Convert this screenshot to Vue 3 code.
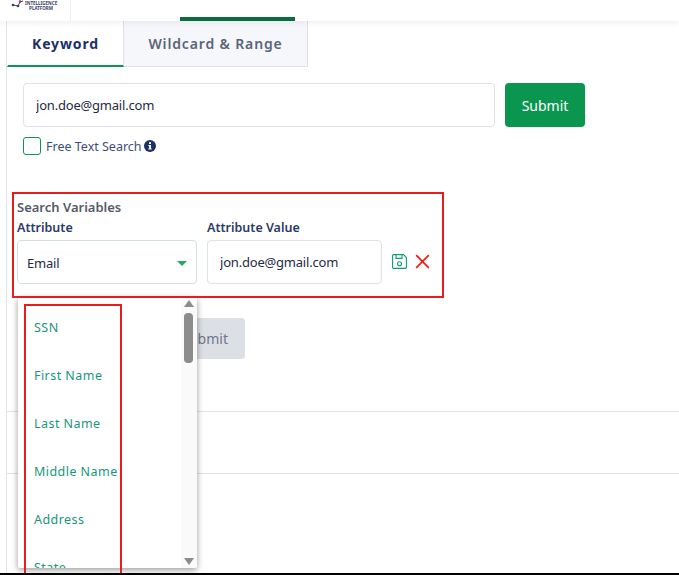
<script setup>
const options = ['SSN', 'First Name', 'Last Name', 'Middle Name', 'Address', 'State']
</script>

<template>
  <div class="page">
    <header class="top-bar">
      <div class="logo">
        <svg class="logo-mark" width="13" height="8" viewBox="0 0 13 8">
          <path d="M2 5 L7 6 L9 2 L12 1" fill="none" stroke="#3b3f6b" stroke-width="1" />
          <circle cx="2" cy="5" r="1.3" fill="#3b3f6b" />
          <circle cx="7" cy="6" r="1.3" fill="#3b3f6b" />
          <circle cx="9" cy="1.5" r="1.2" fill="#b0315a" />
        </svg>
        <div class="logo-text">
          <span>INTELLIGENCE</span>
          <span>PLATFORM</span>
        </div>
      </div>
      <div class="top-tab"></div>
    </header>

    <main class="content">
      <nav class="tabs">
        <button class="tab is-active">Keyword</button>
        <button class="tab">Wildcard &amp; Range</button>
      </nav>

      <div class="search-row">
        <input class="field search-input" value="jon.doe@gmail.com" />
        <button class="submit">Submit</button>
      </div>

      <label class="free-text">
        <span class="checkbox"></span>
        <span>Free Text Search</span>
        <svg class="info" width="12" height="12" viewBox="0 0 12 12">
          <circle cx="6" cy="6" r="6" fill="#1c2f66" />
          <rect x="5" y="2.2" width="2" height="1.8" fill="#fff" />
          <path d="M4.3 5h2.7v3.6h.8v1H4.3v-1h.8V6h-.8z" fill="#fff" />
        </svg>
      </label>

      <section class="variables">
        <h3 class="variables-title">Search Variables</h3>
        <div class="variables-row">
          <div class="col">
            <label class="col-label">Attribute</label>
            <div class="field select">
              <span>Email</span>
              <span class="caret"></span>
            </div>
          </div>
          <div class="col">
            <label class="col-label">Attribute Value</label>
            <input class="field value-input" value="jon.doe@gmail.com" />
          </div>
          <div class="actions">
            <svg width="15" height="15" viewBox="0 0 15 15" fill="none" stroke="#0f9d6b" stroke-width="1.1">
              <path d="M1.5.6h10l2.9 2.9v9.7a1.2 1.2 0 0 1-1.2 1.2H1.8a1.2 1.2 0 0 1-1.2-1.2V1.5A1 1 0 0 1 1.5.6z" />
              <path d="M4 .6v3.8h6V.6" />
              <circle cx="7.5" cy="9.8" r="2" />
            </svg>
            <svg width="15" height="15" viewBox="0 0 15 15" fill="none" stroke="#e8201c" stroke-width="1.7">
              <path d="M1.2 1.2l12.6 12.6M13.8 1.2L1.2 13.8" />
            </svg>
          </div>
        </div>
      </section>

      <div class="submit-row">
        <button class="submit-disabled">Submit</button>
      </div>
      <hr class="rule first" />
      <hr class="rule second" />

      <div class="dropdown">
        <ul class="options">
          <li v-for="opt in options" :key="opt">{{ opt }}</li>
        </ul>
        <div class="scrollbar">
          <span class="arrow up"></span>
          <span class="thumb"></span>
          <span class="arrow down"></span>
        </div>
      </div>
    </main>

    <div class="mark mark-variables"></div>
    <div class="mark mark-options"></div>
  </div>
</template>

<style>
html, body {
  margin: 0;
  background: #fff;
  overflow: hidden;
}
</style>

<style scoped>
.page {
  position: relative;
  width: 679px;
  height: 575px;
  box-sizing: border-box;
  border-bottom: 2px solid #000;
  overflow: hidden;
  font-family: "Noto Sans", "Open Sans", sans-serif;
  color: #1c2f66;
  background: #fff;
}

.top-bar {
  position: relative;
  z-index: 2;
  display: flex;
  height: 21px;
  background: #fff;
  box-shadow: 0 2px 6px rgba(30, 30, 60, 0.07);
}

.logo {
  width: 71px;
  box-sizing: border-box;
  border-right: 1px solid #eceef2;
  display: flex;
  align-items: flex-start;
  padding: 0 0 0 11px;
  overflow: hidden;
}

.logo-text {
  display: flex;
  flex-direction: column;
  align-items: center;
  font-size: 4.5px;
  line-height: 4.5px;
  font-weight: 700;
  color: #3a3f6e;
  margin-left: 1px;
  padding-top: 1px;
}

.top-tab {
  margin-left: 109px;
  width: 115px;
  height: 4px;
  margin-top: 17px;
  background: #0a6b3d;
}

.content {
  position: relative;
  box-sizing: border-box;
  height: 552px;
  margin-left: 6px;
  border-left: 1px solid #e3e5ec;
}

.tabs {
  display: flex;
  height: 46px;
}

.tab {
  box-sizing: border-box;
  height: 46px;
  padding: 0;
  border: 0;
  border-right: 1px solid #dfe1e8;
  border-bottom: 1px solid #dfe1e8;
  background: #f5f7fa;
  font-family: inherit;
  font-size: 14px;
  font-weight: 600;
  letter-spacing: 0.85px;
  color: #5b6479;
  width: 184px;
}

.tab.is-active {
  width: 117px;
  border-left: 1px solid #fff;
  border-bottom: 2px solid #0b9650;
  background: #fff;
  color: #1c2f66;
  font-weight: 700;
}

.search-row {
  display: flex;
  gap: 10px;
  margin: 16px 0 0 16px;
}

.field {
  box-sizing: border-box;
  height: 44px;
  border: 1px solid #dfe1e8;
  border-radius: 4px;
  background: #fff;
  font-family: inherit;
  font-size: 13px;
  letter-spacing: -0.2px;
  color: #1f2a44;
  outline: none;
}

.search-input {
  width: 472px;
  padding: 0 12px;
}

.submit {
  width: 80px;
  height: 44px;
  border: 0;
  border-radius: 4px;
  background: #0b9650;
  color: #fff;
  font-family: inherit;
  font-size: 14px;
  font-weight: 400;
}

.free-text {
  display: flex;
  align-items: center;
  height: 18px;
  margin: 10px 0 0 16px;
  font-size: 12.5px;
  color: #3e4d7a;
}

.checkbox {
  box-sizing: border-box;
  width: 18px;
  height: 18px;
  margin-right: 5px;
  border: 1px solid #0b9650;
  border-radius: 3px;
}

.info {
  margin-left: 2px;
}

.variables {
  margin: 44px 0 0 10px;
  height: 87px;
}

.variables-title {
  margin: 0;
  font-size: 13px;
  line-height: 17px;
  font-weight: 600;
  color: #555b66;
}

.variables-row {
  display: flex;
  gap: 10px;
}

.col-label {
  display: block;
  font-size: 12.5px;
  line-height: 19px;
  margin: 2px 0 3px;
  font-weight: 600;
  color: #2c3a66;
}

.select {
  width: 180px;
  display: flex;
  align-items: center;
  justify-content: space-between;
  padding: 2px 9px 0 9px;
  border-color: #d5dee0;
}

.caret {
  width: 0;
  height: 0;
  border-left: 5px solid transparent;
  border-right: 5px solid transparent;
  border-top: 5px solid #2ba565;
}

.value-input {
  width: 175px;
  padding: 0 12px;
}

.actions {
  display: flex;
  align-items: center;
  gap: 8px;
  margin: 23px 0 0 0;
  height: 44px;
  box-sizing: border-box;
}

.submit-row {
  margin: 32px 0 0 16px;
}

.submit-disabled {
  width: 222px;
  height: 41px;
  border: 0;
  border-radius: 4px;
  background: #dcdfe4;
  color: #6e7690;
  font-family: inherit;
  font-size: 14px;
  text-align: right;
  padding-right: 17px;
}

.rule {
  margin: 0;
  border: 0;
  border-top: 1px solid #e1e2ea;
}

.rule.first {
  margin-top: 52px;
}

.rule.second {
  margin-top: 61px;
}

.dropdown {
  position: absolute;
  top: 276px;
  left: 11px;
  width: 179px;
  height: 271px;
  display: flex;
  justify-content: space-between;
  background: #fff;
  border-radius: 2px;
  box-shadow: 0 2px 6px rgba(0, 0, 0, 0.4);
  overflow: hidden;
}

.options {
  list-style: none;
  margin: 0;
  padding: 7px 0 0 16px;
  font-size: 12.5px;
  letter-spacing: 0.45px;
  color: #17967a;
}

.options li {
  height: 48px;
  line-height: 48px;
  white-space: nowrap;
}

.scrollbar {
  position: relative;
  box-sizing: border-box;
  width: 16px;
  padding-right: 1px;
  background: #fafafa;
  display: flex;
  flex-direction: column;
  align-items: center;
}

.arrow {
  position: absolute;
  width: 0;
  height: 0;
  border-left: 5px solid transparent;
  border-right: 5px solid transparent;
}

.arrow.up {
  top: 3px;
  border-bottom: 7px solid #8c8c8c;
}

.arrow.down {
  bottom: 3px;
  border-top: 7px solid #8c8c8c;
}

.thumb {
  position: absolute;
  top: 16px;
  width: 9px;
  height: 50px;
  border-radius: 4px;
  background: #8c8c8c;
}

.mark {
  position: absolute;
  z-index: 5;
  box-sizing: border-box;
  border: 2px solid #e81c1c;
  pointer-events: none;
}

.mark-variables {
  left: 12px;
  top: 192px;
  width: 432px;
  height: 106px;
}

.mark-options {
  left: 24px;
  top: 304px;
  width: 98px;
  height: 271px;
}
</style>
